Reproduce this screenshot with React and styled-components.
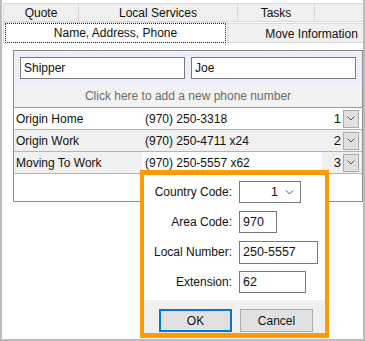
import React from 'react'
import styled, { createGlobalStyle } from 'styled-components'

const Global = createGlobalStyle`
body{
    margin: 0;
    background: #ffffff;
    font-family: 'Liberation Sans', Arial, sans-serif;
    font-size: 12px;
    color: #111111;
}
*{ box-sizing: border-box; }
`
const Frame = styled.div`
position: relative;
width: 365px;
height: 341px;
background: #ffffff;
border-left: 2px solid #bcbcbc;
border-right: 2px solid #bcbcbc;
border-bottom: 2px solid #bcbcbc;
padding-top: 3px;
overflow: hidden;
`
const TabStrip = styled.div`
margin-left: 1px;
width: 360px;
overflow: hidden;
`
const TabRow = styled.div`
display: flex;
height: ${p => p.h}px;
`
const Tab = styled.div`
flex-shrink: 0;
width: ${p => p.w}px;
display: flex;
align-items: center;
justify-content: center;
background: ${p => (p.active ? '#ffffff' : '#f0f0f0')};
border: 1px solid #d9d9d9;
border-left: ${p => (p.first ? '1px solid #d9d9d9' : 'none')};
border-bottom: ${p => (p.active ? 'none' : '1px solid #d9d9d9')};
margin-top: ${p => (p.low ? 1 : 0)}px;
padding-top: ${p => (p.low ? 2 : 0)}px;
span{
    display: flex;
    align-items: center;
    justify-content: center;
    width: 100%;
    height: 100%;
    border: ${p => (p.active ? '1px dotted #222' : 'none')};
    margin: ${p => (p.active ? '0 1px' : '0')};
}
`
const Page = styled.div`
padding: 7px 0 0 11px;
`
const Box = styled.div`
width: 350px;
height: 152px;
border: 1px solid #8d8d8d;
background: #ffffff;
`
const NameBar = styled.div`
display: flex;
gap: 6px;
padding: 6px;
height: 34px;
background: #eceef9;
`
const NameInput = styled.div`
width: 165px;
height: 22px;
border: 1px solid #7a7a7a;
background: #ffffff;
padding: 0 3px;
display: flex;
align-items: center;
`
const AddRow = styled.div`
height: 23px;
background: #f2f2f2;
color: #6b6b6b;
display: flex;
align-items: center;
justify-content: center;
border-bottom: 1px solid #9a9a9a;
`
const PhoneRow = styled.div`
display: flex;
height: 22px;
background: ${p => (p.shade ? '#f0f0f0' : '#ffffff')};
border-bottom: 1px solid #b4b4b4;
`
const NameCell = styled.div`
width: 128px;
padding-left: 2px;
display: flex;
align-items: center;
`
const NumberCell = styled.div`
width: 180px;
padding-left: 3px;
display: flex;
align-items: center;
background: ${p => (p.white ? '#ffffff' : 'transparent')};
`
const RankCell = styled.div`
flex: 1;
display: flex;
align-items: center;
justify-content: flex-end;
gap: 2px;
padding-right: 3px;
font-size: 13px;
`
const DropButton = styled.div`
width: 16px;
height: 18px;
background: #e1e1e1;
border: 1px solid #adadad;
display: flex;
align-items: center;
justify-content: center;
`
const Popup = styled.div`
position: absolute;
left: 138px;
top: 170px;
width: 189px;
height: 168px;
border: 4px solid #ff9a00;
border-top-width: 5px;
border-bottom-width: 5px;
background: #ffffff;
display: flex;
flex-direction: column;
`
const Form = styled.div`
flex: 1;
display: flex;
flex-direction: column;
gap: 8px;
padding-top: 6px;
`
const FormRow = styled.div`
display: flex;
align-items: center;
gap: 7px;
height: 22px;
`
const Label = styled.div`
width: 88px;
text-align: right;
`
const Field = styled.div`
width: ${p => p.w}px;
height: ${p => p.tall ? 23 : 22}px;
border: 1px solid #7a7a7a;
padding: 0 3px;
display: flex;
align-items: center;
font-size: 12.5px;
`
const Select = styled(Field)`
justify-content: flex-end;
gap: 7px;
padding-right: 6px;
`
const Footer = styled.div`
height: 33px;
background: #f0f0f0;
display: flex;
gap: 8px;
padding: 9px 0 0 15px;
`
const Button = styled.div`
width: 73px;
height: 23px;
background: #e1e1e1;
border: ${p => (p.primary ? '2px solid #0078d7' : '1px solid #adadad')};
display: flex;
align-items: center;
justify-content: center;
`

const Chevron = ({ w = 8 }) => (
    <svg width={w} height="5" viewBox="0 0 8 5">
        <polyline points="0.5,0.5 4,4 7.5,0.5" fill="none" stroke="#555" strokeWidth="1" />
    </svg>
)

const phones = [
    { name: 'Origin Home', number: '(970) 250-3318', rank: 1 },
    { name: 'Origin Work', number: '(970) 250-4711 x24', rank: 2, shade: true },
    { name: 'Moving To Work', number: '(970) 250-5557 x62', rank: 3, shade: true, current: true },
]

const App = () => {
    return (
        <>
            <Global />
            <Frame>
                <TabStrip>
                    <TabRow h={19}>
                        <Tab w={76} first>Quote</Tab>
                        <Tab w={159}>Local Services</Tab>
                        <Tab w={77}>Tasks</Tab>
                        <Tab w={80}></Tab>
                    </TabRow>
                    <TabRow h={21}>
                        <Tab w={225} first active><span>Name, Address, Phone</span></Tab>
                        <Tab w={168} low>Move Information</Tab>
                    </TabRow>
                </TabStrip>
                <Page>
                    <Box>
                        <NameBar>
                            <NameInput>Shipper</NameInput>
                            <NameInput>Joe</NameInput>
                        </NameBar>
                        <AddRow>Click here to add a new phone number</AddRow>
                        {phones.map(p => (
                            <PhoneRow key={p.rank} shade={p.shade}>
                                <NameCell>{p.name}</NameCell>
                                <NumberCell white={p.current}>{p.number}</NumberCell>
                                <RankCell>
                                    {p.rank}
                                    <DropButton><Chevron /></DropButton>
                                </RankCell>
                            </PhoneRow>
                        ))}
                    </Box>
                </Page>
                <Popup>
                    <Form>
                        <FormRow>
                            <Label>Country Code:</Label>
                            <Select w={62}>1<Chevron w={9} /></Select>
                        </FormRow>
                        <FormRow>
                            <Label>Area Code:</Label>
                            <Field w={38}>970</Field>
                        </FormRow>
                        <FormRow>
                            <Label>Local Number:</Label>
                            <Field w={79} tall>250-5557</Field>
                        </FormRow>
                        <FormRow>
                            <Label>Extension:</Label>
                            <Field w={67}>62</Field>
                        </FormRow>
                    </Form>
                    <Footer>
                        <Button primary>OK</Button>
                        <Button>Cancel</Button>
                    </Footer>
                </Popup>
            </Frame>
        </>
    )
}

export default App
